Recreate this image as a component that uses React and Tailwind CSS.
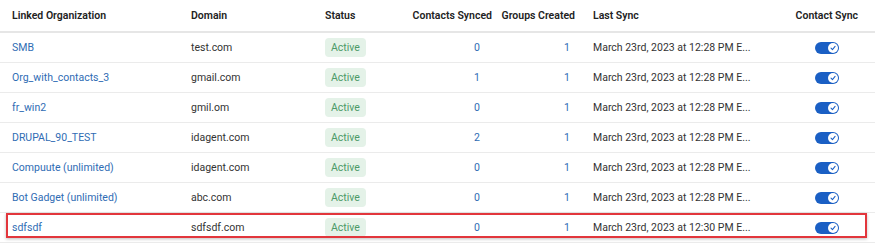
import React from 'react';

const rows = [
  { org: 'SMB', domain: 'test.com', contacts: 0, groups: 1, sync: 'March 23rd, 2023 at 12:28 PM E...' },
  { org: 'Org_with_contacts_3', domain: 'gmail.com', contacts: 1, groups: 1, sync: 'March 23rd, 2023 at 12:28 PM E...' },
  { org: 'fr_win2', domain: 'gmil.om', contacts: 0, groups: 1, sync: 'March 23rd, 2023 at 12:28 PM E...' },
  { org: 'DRUPAL_90_TEST', domain: 'idagent.com', contacts: 2, groups: 1, sync: 'March 23rd, 2023 at 12:28 PM E...' },
  { org: 'Compuute (unlimited)', domain: 'idagent.com', contacts: 0, groups: 1, sync: 'March 23rd, 2023 at 12:28 PM E...' },
  { org: 'Bot Gadget (unlimited)', domain: 'abc.com', contacts: 0, groups: 1, sync: 'March 23rd, 2023 at 12:28 PM E...' },
  { org: 'sdfsdf', domain: 'sdfsdf.com', contacts: 0, groups: 1, sync: 'March 23rd, 2023 at 12:30 PM E...', highlight: true },
];

const cols = 'grid grid-cols-[179px_134px_87px_100px_81px_199px_1fr] items-center whitespace-nowrap';

const Toggle = () => (
  <div className="relative w-[24px] h-[12px] rounded-full bg-[#1a5fc4]">
    <div className="absolute right-[1px] top-[1px] w-[10px] h-[10px] rounded-full bg-white flex items-center justify-center">
      <svg viewBox="0 0 10 10" className="w-[8px] h-[8px]" fill="none" stroke="#1a5fc4" strokeWidth="1.3" strokeLinecap="round" strokeLinejoin="round">
        <path d="M2.5 5.2 L4.3 7 L7.6 3" />
      </svg>
    </div>
  </div>
);

const App = () => {
  return (
    <div className="w-[875px] h-[244px] bg-white overflow-hidden text-[10.5px] text-[#333]" style={{ fontFamily: 'Roboto, "Liberation Sans", sans-serif' }}>
      <div className={`${cols} h-[33px] border-b-2 border-[#e6e6e6] font-semibold text-[#222]`}>
        <div className="pl-[12px]">Linked Organization</div>
        <div className="pl-[12px]">Domain</div>
        <div className="pl-[12px]">Status</div>
        <div className="text-right pr-[8px]">Contacts Synced</div>
        <div className="text-right pr-[6px]">Groups Created</div>
        <div className="pl-[12px]">Last Sync</div>
        <div className="text-right pr-[17px]">Contact Sync</div>
      </div>
      {rows.map((r) => (
        <div key={r.org} className={`relative ${cols} h-[30px] border-b border-[#ebebeb]`}>
          <div className="pl-[12px] text-[#2f6cb4]">{r.org}</div>
          <div className="pl-[12px]">{r.domain}</div>
          <div className="pl-[12px]">
            <span className="inline-block px-[6px] py-[2px] bg-[#e4f2e8] text-[#4c9a68] rounded-sm">Active</span>
          </div>
          <div className="text-right pr-[20px] text-[#2f6cb4]">{r.contacts}</div>
          <div className="text-right pr-[11px] text-[#2f6cb4]">{r.groups}</div>
          <div className="pl-[12px]">{r.sync}</div>
          <div className="flex justify-center pr-[1px]">
            <Toggle />
          </div>
          {r.highlight && (
            <div className="pointer-events-none absolute left-[6px] right-[8px] top-0 bottom-[4px] border-2 border-[#e2363c] shadow-[0_1px_3px_rgba(0,0,0,0.25)]" />
          )}
        </div>
      ))}
    </div>
  );
};

export default App;
